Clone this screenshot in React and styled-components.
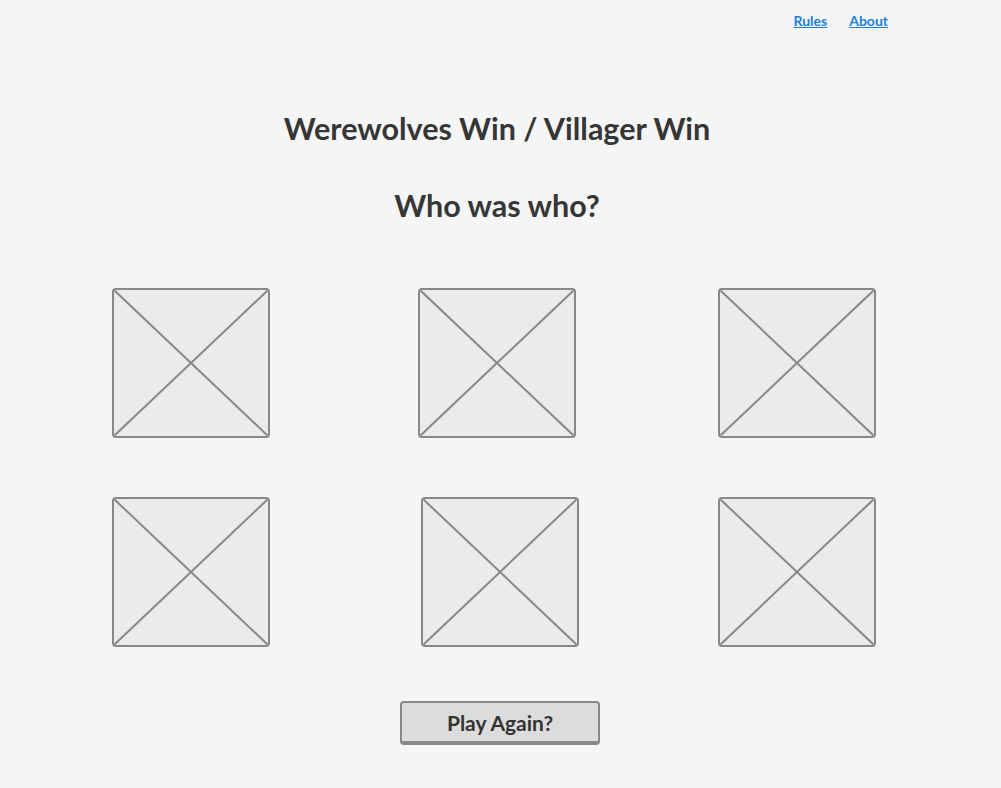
import React from "react";
import styled, { createGlobalStyle } from "styled-components";

const GlobalStyle = createGlobalStyle`
  html, body {
    margin: 0;
    padding: 0;
    background: #f5f5f5;
  }
  body {
    font-family: Lato, "Open Sans", sans-serif;
    color: #333;
  }
`;

const Page = styled.div`
  width: 1001px;
  height: 788px;
  display: flex;
  flex-direction: column;
  align-items: center;
`;

const Nav = styled.nav`
  align-self: stretch;
  display: flex;
  justify-content: flex-end;
  gap: 22px;
  padding: 12px 113px 0 0;
  height: 20px;
`;

const NavLink = styled.a`
  font-size: 14px;
  font-weight: 700;
  color: #1a80d8;
  text-decoration: underline;
  cursor: pointer;
`;

const Title = styled.h1`
  margin: 78px 0 0 -7px;
  font-size: 30.5px;
  line-height: 36px;
  font-weight: 700;
  color: #363636;
`;

const Subtitle = styled.h2`
  margin: 41px 0 0 -7px;
  font-size: 30.5px;
  line-height: 36px;
  font-weight: 700;
  color: #363636;
`;

const Grid = styled.div`
  margin: 65px 0 0 -14px;
  width: 764px;
  display: grid;
  grid-template-columns: repeat(3, 158px);
  justify-content: space-between;
  row-gap: 59px;
`;

const Placeholder = styled.div`
  width: 158px;
  height: 150px;
  box-sizing: border-box;
  margin-left: ${(p) => p.$nudge || 0}px;
  border: 2px solid #888;
  border-radius: 4px;
  background: #ebebeb;
  overflow: hidden;
  svg {
    display: block;
    width: 100%;
    height: 100%;
  }
`;

const Button = styled.button`
  margin: 54px 0 0 -1px;
  width: 200px;
  height: 44px;
  box-sizing: border-box;
  border: 2px solid #888;
  border-bottom-width: 4px;
  border-radius: 4px;
  background: #dcdcdc;
  font-family: Lato, "Open Sans", sans-serif;
  font-size: 21px;
  font-weight: 700;
  color: #333;
  cursor: pointer;
`;

const Cross = () => (
  <svg viewBox="0 0 154 146" preserveAspectRatio="none">
    <line x1="0" y1="0" x2="154" y2="146" stroke="#888" strokeWidth="2" />
    <line x1="154" y1="0" x2="0" y2="146" stroke="#888" strokeWidth="2" />
  </svg>
);

const players = [
  { id: 1, nudge: 0 },
  { id: 2, nudge: 3 },
  { id: 3, nudge: 0 },
  { id: 4, nudge: 0 },
  { id: 5, nudge: 6 },
  { id: 6, nudge: 0 },
];

export default function App() {
  return (
    <Page>
      <GlobalStyle />
      <Nav>
        <NavLink>Rules</NavLink>
        <NavLink>About</NavLink>
      </Nav>
      <Title>Werewolves Win / Villager Win</Title>
      <Subtitle>Who was who?</Subtitle>
      <Grid>
        {players.map((p) => (
          <Placeholder key={p.id} $nudge={p.nudge}>
            <Cross />
          </Placeholder>
        ))}
      </Grid>
      <Button>Play Again?</Button>
    </Page>
  );
}
